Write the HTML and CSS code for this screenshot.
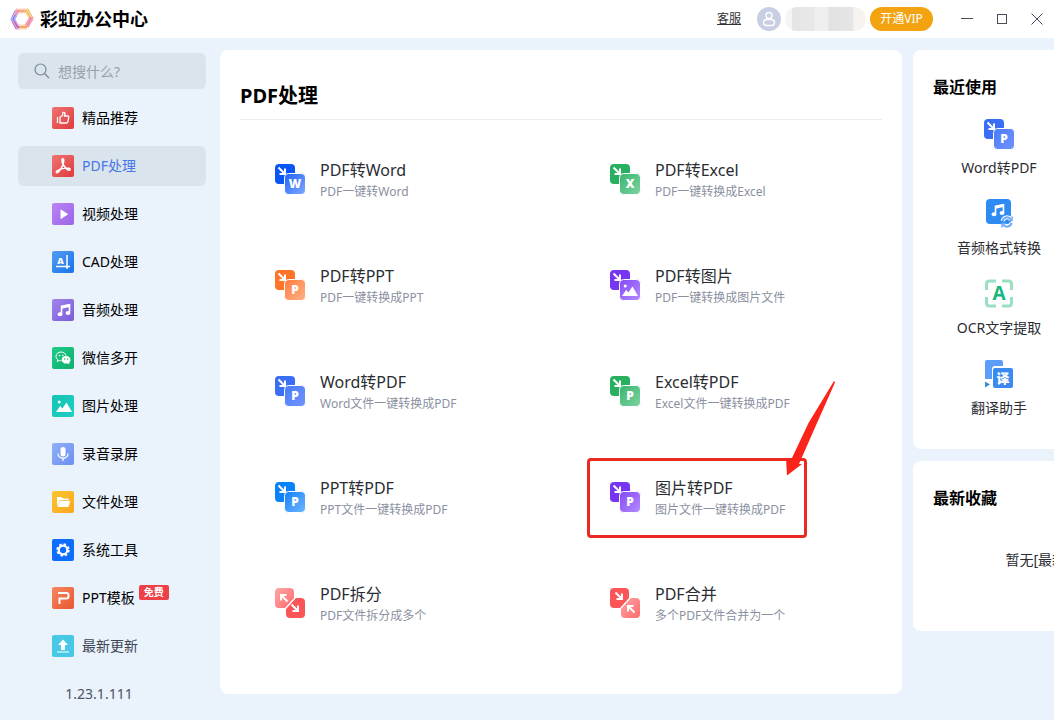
FILE: index.html
```html
<!DOCTYPE html>
<html lang="zh-CN">
  <head>
    <meta charset="UTF-8" />
    <meta name="viewport" content="width=device-width, initial-scale=1.0" />
    <title>彩虹办公中心</title>
    <link rel="stylesheet" href="styles.css">
  </head>
  <body>
    <!-- shared gradients and icon parts -->
    <svg class="defs" width="0" height="0" aria-hidden="true">
      <defs>
        <linearGradient id="gRed" x1="0" y1="0" x2="1" y2="1"><stop offset="0" stop-color="#ee7472" /><stop offset="1" stop-color="#e03a3c" /></linearGradient>
        <linearGradient id="gViolet" x1="0" y1="0" x2="1" y2="1"><stop offset="0" stop-color="#bd84f5" /><stop offset="1" stop-color="#9a65e6" /></linearGradient>
        <linearGradient id="gCad" x1="0" y1="0" x2="1" y2="1"><stop offset="0" stop-color="#559cf0" /><stop offset="1" stop-color="#1673ec" /></linearGradient>
        <linearGradient id="gMusic" x1="0" y1="0" x2="1" y2="1"><stop offset="0" stop-color="#a184ec" /><stop offset="1" stop-color="#7a5bd8" /></linearGradient>
        <linearGradient id="gWechat" x1="0" y1="0" x2="1" y2="1"><stop offset="0" stop-color="#20cb88" /><stop offset="1" stop-color="#10ae6c" /></linearGradient>
        <linearGradient id="gTeal" x1="0" y1="0" x2="1" y2="1"><stop offset="0" stop-color="#12c4b4" /><stop offset="1" stop-color="#20cfc4" /></linearGradient>
        <linearGradient id="gMic" x1="0" y1="0" x2="1" y2="1"><stop offset="0" stop-color="#8fb0f8" /><stop offset="1" stop-color="#6d8ff0" /></linearGradient>
        <linearGradient id="gFile" x1="0" y1="0" x2="1" y2="1"><stop offset="0" stop-color="#fbc62f" /><stop offset="1" stop-color="#fba61c" /></linearGradient>
        <linearGradient id="gPpt" x1="0" y1="0" x2="1" y2="1"><stop offset="0" stop-color="#f58862" /><stop offset="1" stop-color="#e9562f" /></linearGradient>
        <linearGradient id="gW" x1="0" y1="0" x2="1" y2="1"><stop offset="0" stop-color="#1f62f7" /><stop offset="1" stop-color="#82aaff" /></linearGradient>
        <linearGradient id="gX" x1="0" y1="0" x2="1" y2="1"><stop offset="0" stop-color="#38b56c" /><stop offset="1" stop-color="#7ed3a2" /></linearGradient>
        <linearGradient id="gP" x1="0" y1="0" x2="1" y2="1"><stop offset="0" stop-color="#ff7e3c" /><stop offset="1" stop-color="#ffb088" /></linearGradient>
        <linearGradient id="gImg" x1="0" y1="0" x2="1" y2="1"><stop offset="0" stop-color="#8349f5" /><stop offset="1" stop-color="#b58cff" /></linearGradient>
        <linearGradient id="gIndigo" x1="0" y1="0" x2="1" y2="1"><stop offset="0" stop-color="#4a7af8" /><stop offset="1" stop-color="#7094ff" /></linearGradient>
        <linearGradient id="gSky" x1="0" y1="0" x2="1" y2="1"><stop offset="0" stop-color="#1280fb" /><stop offset="1" stop-color="#6fb6ff" /></linearGradient>
        <linearGradient id="gPink" x1="0" y1="0" x2="1" y2="1"><stop offset="0" stop-color="#ffa5a5" /><stop offset="1" stop-color="#ff6a6c" /></linearGradient>
      </defs>
      <symbol id="arrow" viewBox="0 0 10 10">
        <path d="M1.5 1.5 7.5 7.5M8 2.5V8H2.5" fill="none" stroke="#fff" stroke-width="2" />
      </symbol>
      <symbol id="hills" viewBox="0 0 16 12">
        <circle cx="3.2" cy="2" r="1.5" fill="#fff" />
        <path d="M0 12 4.2 6l2.2 2.6L10.5 2.5 16 12z" fill="#fff" />
      </symbol>
      <symbol id="notes" viewBox="0 0 14 14">
        <path d="M4.5 11V3.5L12.5 1.8V9.5" fill="none" stroke="#fff" stroke-width="1.6" />
        <path d="M4.5 2.8 12.5 1V4l-8 1.7z" fill="#fff" />
        <ellipse cx="3" cy="11.3" rx="2.4" ry="2" fill="#fff" />
        <ellipse cx="11" cy="9.9" rx="2.4" ry="2" fill="#fff" />
      </symbol>
    </svg>

    <header class="topbar">
      <div class="brand">
        <svg width="24" height="24" viewBox="0 0 24 24" fill="none" stroke-width="4.500">
          <path d="M6 4h9.500" stroke="#f7a488" />
          <path d="M14.500 4H17l4 7" stroke="#f4bd62" />
          <path d="M21 10v2l-4.500 7.500" stroke="#ef7d9f" />
          <path d="M17 20H8" stroke="#f5a765" />
          <path d="M9 20H7l-3.500-6.500" stroke="#ba68c4" />
          <path d="M3 14v-2l4-8" stroke="#8d86ef" />
          <path d="M5 8l3-5.500" stroke="#f08aa0" stroke-width="3" />
          <path d="M7 2.500h10L22.500 12 17 21.500H7L1.500 12zM8 5.500h8l3.500 6.500-3.500 6.500H8L4.500 12z" stroke="#fff" stroke-width=".5" />
        </svg>
        <h1>彩虹办公中心</h1>
      </div>
      <div class="account">
        <a class="service" href="#">客服</a>
        <svg class="avatar" width="24" height="24" viewBox="0 0 24 24">
          <circle cx="12" cy="12" r="12" fill="#c9cfe2" />
          <g fill="none" stroke="#fff" stroke-width="1.4">
            <circle cx="12" cy="8.5" r="3" />
            <rect x="6.5" y="12.5" width="11" height="6" rx="3" />
          </g>
        </svg>
        <span class="user-name"></span>
        <button class="vip" type="button">开通VIP</button>
        <div class="window-buttons">
          <button type="button" aria-label="最小化"><svg width="12" height="12"><path d="M0 5.5h12" /></svg></button>
          <button type="button" aria-label="最大化"><svg width="12" height="12"><rect x="1.5" y="1.5" width="9" height="9" /></svg></button>
          <button type="button" aria-label="关闭"><svg width="12" height="12"><path d="M.5 .5l11 11M11.5 .5l-11 11" /></svg></button>
        </div>
      </div>
    </header>

    <div class="layout">
      <aside class="sidebar">
        <form class="search" action="#">
          <label for="keyword" aria-label="搜索">
            <svg width="16" height="16" fill="none" stroke="#7b8794" stroke-width="1.2"><circle cx="6.5" cy="6.5" r="5.5" /><path d="M10.5 10.5l4.5 4.5" /></svg>
          </label>
          <input type="text" id="keyword" placeholder="想搜什么?" />
        </form>

        <nav class="menu">
          <a href="#">
            <svg width="22" height="22"><rect width="22" height="22" rx="2" fill="url(#gRed)" /><path d="M5.5 10v6M8 10l2.5-1.5L11 5.5q2-.5 2 1.5L12.5 9H16q1 0 .8 1.2l-1 4.6q-.3 1.2-1.5 1.2H8z" fill="none" stroke="#fff" stroke-width="1.3" stroke-linejoin="round" /></svg>
            精品推荐
          </a>
          <a class="active" href="#">
            <svg width="22" height="22"><rect width="22" height="22" rx="2" fill="url(#gRed)" /><path d="M10 4.5q1.5-1.5 1.7 .5c.3 3-2 9-5.7 12.5-1.5 1-2.5-.5-1-1.7 3-2 8-3.3 12-2.5 2 .6 1 2.4-.7 1.7C13 13.5 9.5 8 10 4.5z" fill="none" stroke="#fff" stroke-width="1.5" /></svg>
            PDF处理
          </a>
          <a href="#">
            <svg width="22" height="22"><rect width="22" height="22" rx="2" fill="url(#gViolet)" /><path d="M9 7l6.5 4.2L9 15.4z" fill="#fff" stroke="#fff" stroke-linejoin="round" /></svg>
            视频处理
          </a>
          <a href="#">
            <svg width="22" height="22"><rect width="22" height="22" rx="2" fill="url(#gCad)" /><path d="M15 4v14M4 15.5h14" stroke="#fff" stroke-width="1.5" /><text class="glyph" x="8.5" y="12.5" font-size="9">A</text></svg>
            CAD处理
          </a>
          <a href="#">
            <svg width="22" height="22"><rect width="22" height="22" rx="2" fill="url(#gMusic)" /><use href="#notes" x="5" y="4" width="14" height="14" /></svg>
            音频处理
          </a>
          <a href="#">
            <svg width="22" height="22"><rect width="22" height="22" rx="2" fill="url(#gWechat)" /><path d="M9 5c-3 0-5 2-5 4.3 0 1.5.8 2.600 1.8 3.4L5.3 14.5l2.2-1.1q1 .3 2 .2" fill="none" stroke="#fff" /><path d="M9 5c2.5 0 4.5 1.5 5 3.5" fill="none" stroke="#fff" /><circle cx="7.5" cy="8.5" r=".8" fill="#fff" /><circle cx="10.8" cy="8.5" r=".8" fill="#fff" /><path d="M14 9c2.5 0 4.5 1.7 4.5 3.9 0 1.1-.6 2.1-1.4 2.8l.3 1.6-1.7-.9c-3 .7-6-1-6-3.5C9.7 10.7 11.5 9 14 9z" fill="#fff" /><circle cx="12.7" cy="12" r=".7" fill="#14b873" /><circle cx="15.6" cy="12" r=".7" fill="#14b873" /></svg>
            微信多开
          </a>
          <a href="#">
            <svg width="22" height="22"><rect width="22" height="22" rx="2" fill="url(#gTeal)" /><use href="#hills" x="4" y="5" width="16" height="12" /></svg>
            图片处理
          </a>
          <a href="#">
            <svg width="22" height="22"><rect width="22" height="22" rx="2" fill="url(#gMic)" /><rect x="8.5" y="4" width="5" height="9.5" rx="2.5" fill="#fff" /><path d="M6 10.5c0 6.3 10 6.3 10 0M11 15.5V18" fill="none" stroke="#fff" stroke-width="1.3" /></svg>
            录音录屏
          </a>
          <a href="#">
            <svg width="22" height="22"><rect width="22" height="22" rx="2" fill="url(#gFile)" /><path d="M5 15.5V6h4.5l1.5 1.5h5.5V9H8z" fill="#fff" /><path d="M8 9.7h10.2L16.5 16H5.5z" fill="#fff" /></svg>
            文件处理
          </a>
          <a href="#">
            <svg width="22" height="22"><rect width="22" height="22" rx="2" fill="#0d6efd" /><circle cx="11" cy="11" r="4.3" fill="none" stroke="#fff" stroke-width="2.2" /><circle cx="11" cy="11" r="5.8" fill="none" stroke="#fff" stroke-width="1.8" stroke-dasharray="2.4 2.155" /></svg>
            系统工具
          </a>
          <a href="#">
            <svg width="22" height="22"><rect width="22" height="22" rx="2" fill="url(#gPpt)" /><path d="M6 6h8.5q2 0 2 2v1.5q0 2-2 2H7.5V17" fill="none" stroke="#fff" stroke-width="2" /></svg>
            PPT模板
            <span class="badge">免费</span>
          </a>
          <a class="muted" href="#">
            <svg width="22" height="22"><rect width="22" height="22" rx="2" fill="#46c8e6" /><path d="M11 4.5l5 5.5h-3v5H9v-5H6zM5 16.5h12v1H5z" fill="#fff" /></svg>
            最新更新
          </a>
        </nav>
        <p class="version">1.23.1.111</p>
      </aside>

      <main class="panel tools">
        <h2>PDF处理</h2>
        <div class="tool-grid">
          <a class="tool" href="#">
            <svg class="tool-icon" viewBox="0 0 30 30"><rect width="20" height="20" rx="4" fill="#0a55f5" /><use href="#arrow" x="2" y="2" width="10" height="10" /><rect class="front" x="9.500" y="9.500" width="21" height="21" rx="4" fill="url(#gW)" /><text class="glyph" x="20" y="24" font-size="12">W</text></svg>
            <div><h3>PDF转Word</h3><p>PDF一键转Word</p></div>
          </a>
          <a class="tool" href="#">
            <svg class="tool-icon" viewBox="0 0 30 30"><rect width="20" height="20" rx="4" fill="#28b061" /><use href="#arrow" x="2" y="2" width="10" height="10" /><rect class="front" x="9.500" y="9.500" width="21" height="21" rx="4" fill="url(#gX)" /><text class="glyph" x="20" y="24" font-size="12">X</text></svg>
            <div><h3>PDF转Excel</h3><p>PDF一键转换成Excel</p></div>
          </a>
          <a class="tool" href="#">
            <svg class="tool-icon" viewBox="0 0 30 30"><rect width="20" height="20" rx="4" fill="#ff7427" /><use href="#arrow" x="2" y="2" width="10" height="10" /><rect class="front" x="9.500" y="9.500" width="21" height="21" rx="4" fill="url(#gP)" /><text class="glyph" x="20" y="24" font-size="12">P</text></svg>
            <div><h3>PDF转PPT</h3><p>PDF一键转换成PPT</p></div>
          </a>
          <a class="tool" href="#">
            <svg class="tool-icon" viewBox="0 0 30 30"><rect width="20" height="20" rx="4" fill="#7535f2" /><use href="#arrow" x="2" y="2" width="10" height="10" /><rect class="front" x="9.500" y="9.500" width="21" height="21" rx="4" fill="url(#gImg)" /><use href="#hills" x="12" y="14" width="16" height="12" /></svg>
            <div><h3>PDF转图片</h3><p>PDF一键转换成图片文件</p></div>
          </a>
          <a class="tool" href="#">
            <svg class="tool-icon" viewBox="0 0 30 30"><rect width="20" height="20" rx="4" fill="#3a6ef5" /><use href="#arrow" x="2" y="2" width="10" height="10" /><rect class="front" x="9.500" y="9.500" width="21" height="21" rx="4" fill="url(#gIndigo)" /><text class="glyph" x="20" y="24" font-size="12">P</text></svg>
            <div><h3>Word转PDF</h3><p>Word文件一键转换成PDF</p></div>
          </a>
          <a class="tool" href="#">
            <svg class="tool-icon" viewBox="0 0 30 30"><rect width="20" height="20" rx="4" fill="#28b061" /><use href="#arrow" x="2" y="2" width="10" height="10" /><rect class="front" x="9.500" y="9.500" width="21" height="21" rx="4" fill="url(#gX)" /><text class="glyph" x="20" y="24" font-size="12">P</text></svg>
            <div><h3>Excel转PDF</h3><p>Excel文件一键转换成PDF</p></div>
          </a>
          <a class="tool" href="#">
            <svg class="tool-icon" viewBox="0 0 30 30"><rect width="20" height="20" rx="4" fill="#0a82f8" /><use href="#arrow" x="2" y="2" width="10" height="10" /><rect class="front" x="9.500" y="9.500" width="21" height="21" rx="4" fill="url(#gSky)" /><text class="glyph" x="20" y="24" font-size="12">P</text></svg>
            <div><h3>PPT转PDF</h3><p>PPT文件一键转换成PDF</p></div>
          </a>
          <a class="tool marked" href="#">
            <svg class="tool-icon" viewBox="0 0 30 30"><rect width="20" height="20" rx="4" fill="#7535f2" /><use href="#arrow" x="2" y="2" width="10" height="10" /><rect class="front" x="9.500" y="9.500" width="21" height="21" rx="4" fill="url(#gImg)" /><text class="glyph" x="20" y="24" font-size="12">P</text></svg>
            <div><h3>图片转PDF</h3><p>图片文件一键转换成PDF</p></div>
            <svg class="pointer" width="50" height="96"><path d="M48 1l1 1.5L31 43 13 84h3L1 95.5 0 78l5.500 1L22.500 43z" fill="#fb241a" /></svg>
          </a>
          <a class="tool" href="#">
            <svg class="tool-icon" viewBox="0 0 30 30"><path d="M4 0h11q4 0 4 4v6L10 20H4q-4 0-4-4V4q0-4 4-4z" fill="url(#gPink)" /><path d="M21 10h5q4 0 4 4v12q0 4-4 4H15q-4 0-4-4v-5z" fill="#fb5558" /><use href="#arrow" x="4" y="5" width="10" height="10" transform="rotate(180 9 10)" /><use href="#arrow" x="15" y="15" width="10" height="10" /></svg>
            <div><h3>PDF拆分</h3><p>PDF文件拆分成多个</p></div>
          </a>
          <a class="tool" href="#">
            <svg class="tool-icon" viewBox="0 0 30 30"><path d="M4 0h11q4 0 4 4v6L10 20H4q-4 0-4-4V4q0-4 4-4z" fill="#fb5558" /><path d="M21 10h5q4 0 4 4v12q0 4-4 4H15q-4 0-4-4v-5z" fill="url(#gPink)" /><use href="#arrow" x="4" y="3" width="10" height="10" /><use href="#arrow" x="16" y="16" width="10" height="10" transform="rotate(180 21 21)" /></svg>
            <div><h3>PDF合并</h3><p>多个PDF文件合并为一个</p></div>
          </a>
        </div>
      </main>

      <aside class="side">
        <section class="panel recent">
          <h2>最近使用</h2>
          <a href="#">
            <svg class="tool-icon" viewBox="0 0 30 30"><rect width="20" height="20" rx="4" fill="#3a6ef5" /><use href="#arrow" x="2" y="2" width="10" height="10" /><rect class="front" x="9.500" y="9.500" width="21" height="21" rx="4" fill="url(#gIndigo)" /><text class="glyph" x="20" y="24" font-size="12">P</text></svg>
            Word转PDF
          </a>
          <a href="#">
            <svg class="tool-icon" viewBox="0 0 30 30"><rect x="2" width="25" height="25" rx="4" fill="#2e8bf3" /><use href="#notes" x="7" y="4" width="14" height="14" /><g fill="none" stroke="#fff" stroke-width="4"><path d="M18.5 22c1-4 6-5 8.500-1.500M27.500 24c-1 4-6 5-8.500 1.500" /></g><g fill="none" stroke="#6caaf5" stroke-width="2"><path d="M18.5 22c1-4 6-5 8.500-1.500M27.500 24c-1 4-6 5-8.500 1.500" /><path d="M28 17.500v4h-4M18 28.500v-4h4" stroke-width="1.500" /></g></svg>
            音频格式转换
          </a>
          <a href="#">
            <svg class="tool-icon" viewBox="0 0 30 30"><path d="M2.500 11V5q0-3 3-3H12M18 2h6.500q3 0 3 3v6M27.500 18v6q0 3-3 3H18M12 27H5.500q-3 0-3-3v-6" fill="none" stroke="#9adfc2" stroke-width="3" /><text class="glyph ocr" x="15" y="21" font-size="19">A</text></svg>
            OCR文字提取
          </a>
          <a href="#">
            <svg class="tool-icon" viewBox="0 0 30 30"><path d="M3 1h14q2 0 2 2v4H11q-3 0-3 3v10H1V3q0-2 2-2z" fill="#5b9df8" /><rect x="9" y="9" width="20" height="20" rx="2" fill="#3a8af0" /><path d="M1 22.500l5 3L1 28.500z" fill="#3a8ad8" /><text class="glyph" x="19" y="24" font-size="13">译</text></svg>
            翻译助手
          </a>
        </section>
        <section class="panel favorites">
          <h2>最新收藏</h2>
          <p>暂无[最新收藏]</p>
        </section>
      </aside>
    </div>
  </body>
</html>
```

FILE: styles.css
```css
*,
*::after {
  padding: 0;
  margin: 0;
  box-sizing: border-box;
}

body {
  min-height: 100vh;
  background-color: #eaf2fb;
  font-family: "Noto Sans", "Noto Sans CJK SC", sans-serif;
  font-size: 14px;
  line-height: 20px;
  color: #000;
  overflow: hidden;
}

a {
  color: inherit;
  text-decoration: none;
}

button,
input {
  font-family: inherit;
  border: none;
  background: none;
}

svg {
  flex: none;
}

.defs {
  position: absolute;
}

.glyph {
  fill: #fff;
  font-family: "Open Sans", "Noto Sans CJK SC", sans-serif;
  font-weight: 800;
  text-anchor: middle;
}

.ocr {
  fill: #17b67c;
  font-weight: bold;
}

/* top bar */
.topbar {
  height: 38px;
  padding: 0 5px 0 10px;
  display: flex;
  align-items: center;
  justify-content: space-between;
  background-color: #fff;
}

.brand,
.account,
.window-buttons {
  display: flex;
  align-items: center;
}

.brand {
  gap: 6px;
}

.brand h1 {
  font-size: 18px;
  line-height: 24px;
}

.service {
  margin-right: 16px;
  font-size: 12px;
  color: #333;
  text-decoration: underline;
}

.user-name {
  width: 81px;
  height: 24px;
  margin: 0 4px;
  border-radius: 12px;
  background: linear-gradient(90deg, #f5f5f5 8%, #e6e4e4 9%, #e9e8e8 36%, #f0efef 37%, #f0efef 53%, #e2e2e2 54%, #e6e6e6 84%, #f7f3ee 85%);
}

.vip {
  width: 63px;
  height: 24px;
  border-radius: 12px;
  background-color: #f3a310;
  color: #fff;
  font-size: 12px;
  line-height: 24px;
}

.window-buttons {
  gap: 11px;
  margin-left: 22px;
}

.window-buttons button {
  width: 24px;
  height: 24px;
}

.window-buttons svg {
  display: block;
  margin: 0 auto;
  fill: none;
  stroke: #4a4a58;
}

/* columns */
.layout {
  min-width: 1191px;
  padding: 12px 0;
  display: flex;
  align-items: flex-start;
}

.panel {
  background-color: #fff;
  border-radius: 8px;
}

/* sidebar */
.sidebar {
  width: 220px;
  padding: 3px 14px 0 18px;
}

.search {
  height: 36px;
  padding: 0 16px;
  margin-bottom: 9px;
  display: flex;
  align-items: center;
  gap: 8px;
  background-color: #d9e4ed;
  border-radius: 6px;
}

.search label {
  display: flex;
}

.search input {
  width: 100%;
  font-size: 14px;
  outline: none;
}

.search input::placeholder {
  color: #9a9fa6;
}

.menu {
  display: flex;
  flex-direction: column;
  gap: 8px;
}

.menu a {
  height: 40px;
  padding-left: 34px;
  display: flex;
  align-items: center;
  gap: 8px;
  border-radius: 6px;
}

.menu .active {
  background-color: #d9e4ed;
  color: #4876e8;
}

.menu .muted {
  color: #3c4552;
}

.badge {
  height: 15px;
  margin: 0 0 12px -4px;
  padding: 0 5px;
  border-radius: 2px;
  background-color: #ee4048;
  color: #fff;
  font-size: 10px;
  font-weight: bold;
  line-height: 15px;
}

.version {
  margin-top: 18px;
  padding-right: 26px;
  text-align: center;
  color: #4a5362;
}

/* tools */
.tools {
  flex: 1;
  padding: 32px 6px 38px;
}

.tools h2 {
  margin: 0 14px 6px;
  padding-bottom: 9px;
  border-bottom: 1px solid #ededed;
  font-size: 20px;
  line-height: 28px;
}

.tool-grid {
  display: grid;
  grid-template-columns: 1fr 1fr;
}

.tool {
  position: relative;
  height: 106px;
  padding-left: 49px;
  display: flex;
  align-items: center;
  gap: 15px;
}

.tool-icon {
  width: 30px;
  height: 30px;
  overflow: visible;
}

.front {
  stroke: #fff;
  stroke-width: 1px;
}

.tool h3 {
  font-size: 16px;
  font-weight: normal;
  line-height: 26px;
  color: #2b2d33;
}

.tool p {
  font-size: 12px;
  line-height: 18px;
  color: #8a90a0;
}

/* red frame round the marked tool */
.marked::after {
  content: "";
  position: absolute;
  left: 26px;
  top: 14px;
  width: 220px;
  height: 80px;
  border: 3px solid #ea2a22;
  border-radius: 4px;
}

.pointer {
  position: absolute;
  left: 225px;
  top: -64px;
  z-index: 1;
}

/* right column */
.side {
  width: 278px;
  margin-left: 11px;
  display: flex;
  flex-direction: column;
  gap: 12px;
}

.side .panel {
  padding: 25px 20px 10px;
}

.side h2 {
  margin-bottom: 20px;
  font-size: 16px;
  line-height: 24px;
}

.recent a {
  width: 132px;
  height: 80px;
  display: flex;
  flex-direction: column;
  align-items: center;
  gap: 9px;
  color: #2b2d33;
}

.favorites p {
  padding: 20px 0 51px;
  text-align: center;
  color: #2b2d33;
}
```
